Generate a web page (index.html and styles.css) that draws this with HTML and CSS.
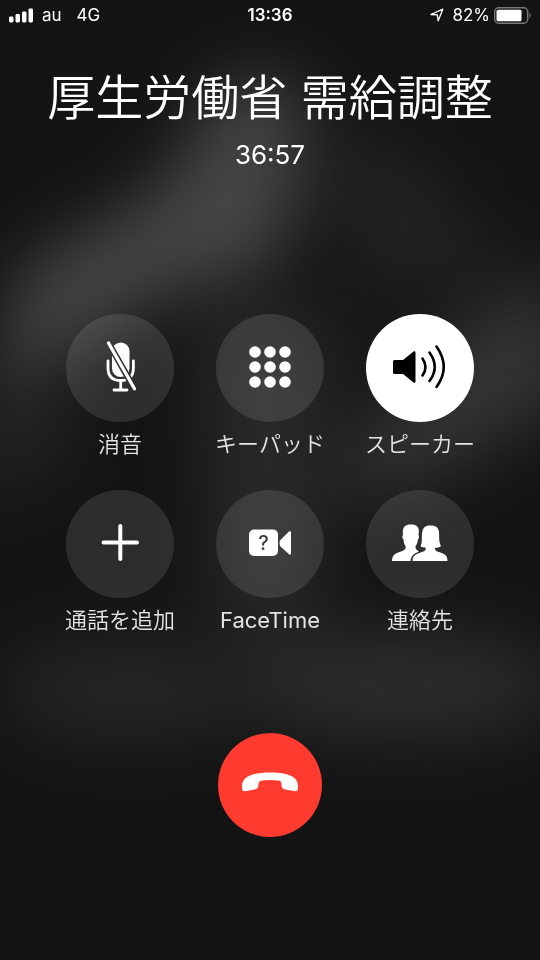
FILE: index.html
```html
<!DOCTYPE html>
<html lang="ja">
<head>
<meta charset="utf-8">
<meta name="viewport" content="width=device-width, initial-scale=1">
<title>通話中</title>
<link rel="stylesheet" href="styles.css">
</head>
<body>
<svg class="backdrop" viewBox="0 0 540 960" preserveAspectRatio="none" aria-hidden="true">
  <defs>
    <filter id="soft" x="-60%" y="-60%" width="220%" height="220%" color-interpolation-filters="sRGB"><feGaussianBlur stdDeviation="34"/></filter>
  </defs>
  <g filter="url(#soft)">
    <path d="M20 270 L160 190 L225 80 L300 80 L300 200 L270 270 L170 290 L90 340 L-10 400 Z" fill="#464648"/>
    <path d="M200 310 H335 L315 630 H215 Z" fill="#292929"/>
    <path d="M560 270 L450 330 L340 460 L360 510 L470 460 L580 390 Z" fill="#343434"/>
    <path d="M-40 400 L80 380 L70 470 L-40 500 Z" fill="#222222"/>
    <path d="M310 120 L410 150 L520 280 L360 290 Z" fill="#232222"/>
    <ellipse cx="130" cy="690" rx="130" ry="50" fill="#262626"/>
    <ellipse cx="400" cy="685" rx="160" ry="56" fill="#2c2c2c"/>
  </g>
</svg>
<div class="screen">
  <header class="status">
    <div class="status-left">
      <svg class="signal" viewBox="0 0 25 15" aria-label="電波">
        <g fill="#fff"><rect x="1" y="8.500" width="4.500" height="6" rx="1.400"/><rect x="7.500" y="6" width="4.500" height="8.500" rx="1.400"/><rect x="14" y="3.500" width="4.500" height="11" rx="1.400"/><rect x="20.500" y="0.500" width="4.500" height="14" rx="1.400"/></g>
      </svg>
      <span>au</span>
      <span class="network">4G</span>
    </div>
    <time class="clock">13:36</time>
    <div class="status-right">
      <svg class="location" viewBox="0 0 14 14" aria-hidden="true"><path d="M1 6.500 L12.800 1.200 L8.200 12.800 L7.300 6.800 Z" fill="none" stroke="#fff" stroke-width="1.300" stroke-linejoin="round"/></svg>
      <span>82%</span>
      <svg class="battery" viewBox="0 0 38 17" aria-hidden="true">
        <rect x="0.700" y="0.700" width="33" height="15.600" rx="4" fill="none" stroke="#777" stroke-width="1.400"/>
        <rect x="2.500" y="2.700" width="25" height="11.600" rx="1.500" fill="#fff"/>
        <path d="M35.500 5.500 Q38 8.500 35.500 11.500 Z" fill="#777"/>
      </svg>
    </div>
  </header>

  <main class="call">
    <h1 class="caller">厚生労働省 需給調整</h1>
    <p class="duration">36:57</p>

    <div class="controls">
      <button class="control" type="button">
        <span class="disc"><svg class="icon" viewBox="0 0 108 108" aria-hidden="true">
          <defs>
            <mask id="slash-gap">
              <rect width="108" height="108" fill="#fff"/>
              <path d="M39.500 23.700 L72 81" stroke="#000" stroke-width="6.400"/>
            </mask>
          </defs>
          <g mask="url(#slash-gap)">
            <rect x="46" y="28.500" width="17.500" height="34.500" rx="8.700" fill="#fff"/>
            <path d="M42 47 V54 C42 62.500 47 66.500 54.700 66.500 S67.400 62.500 67.400 54 V47 M54.700 67 V76 M48 76 H61" fill="none" stroke="#fff" stroke-width="2.800" stroke-linecap="round"/>
          </g>
          <path d="M42.500 29 L68.500 74.800" stroke="#fff" stroke-width="3.300" stroke-linecap="round"/>
        </svg></span>
        <span class="label">消音</span>
      </button>
      <button class="control" type="button">
        <span class="disc"><svg class="icon" viewBox="0 0 108 108" aria-hidden="true">
          <g fill="#fff"><circle cx="39" cy="38" r="5.800"/><circle cx="54" cy="38" r="5.800"/><circle cx="69" cy="38" r="5.800"/><circle cx="39" cy="53" r="5.800"/><circle cx="54" cy="53" r="5.800"/><circle cx="69" cy="53" r="5.800"/><circle cx="39" cy="68" r="5.800"/><circle cx="54" cy="68" r="5.800"/><circle cx="69" cy="68" r="5.800"/></g>
        </svg></span>
        <span class="label">キーパッド</span>
      </button>
      <button class="control active" type="button" aria-pressed="true">
        <span class="disc"><svg class="icon" viewBox="0 0 108 108" aria-hidden="true">
          <path d="M28.500 46 H37 L47.500 37.500 Q49.500 36.500 49.500 38.500 V67.500 Q49.500 69.500 47.500 68.500 L37 60 H28.500 Q27 60 27 58.500 V47.500 Q27 46 28.500 46 Z" fill="#000"/>
          <path d="M56.500 44.500 Q62.500 53 56.500 61.500 M63.500 38.500 Q74 53 63.500 67 M70.500 32.500 Q85 53 70.500 73" fill="none" stroke="#000" stroke-width="2.600" stroke-linecap="round"/>
        </svg></span>
        <span class="label">スピーカー</span>
      </button>
      <button class="control" type="button">
        <span class="disc"><svg class="icon" viewBox="0 0 108 108" aria-hidden="true">
          <path d="M54.300 36 V69 M37.500 52.500 H71" stroke="#fff" stroke-width="4" stroke-linecap="round"/>
        </svg></span>
        <span class="label">通話を追加</span>
      </button>
      <button class="control" type="button">
        <span class="disc"><svg class="icon" viewBox="0 0 108 108" aria-hidden="true">
          <rect x="33" y="39.500" width="29" height="26.500" rx="5" fill="#fff"/>
          <path d="M64 50.500 L73 41.500 Q75 40.200 75 42.700 V63 Q75 65.500 73 64.200 L64 56 Q63 53 64 50.500 Z" fill="#fff"/>
          <text class="icon-mark" x="47.500" y="60" text-anchor="middle">?</text>
        </svg></span>
        <span class="label latin">FaceTime</span>
      </button>
      <button class="control" type="button">
        <span class="disc"><svg class="icon" viewBox="0 0 108 108" aria-hidden="true">
          <g fill="#fff" transform="translate(0 -1)">
            <path d="M26 72 C26 66 29 64.500 35 62.500 C39 61 40 60 39.500 57 C38 55 37.800 53 37.500 50.500 C36 49 36 47 37 46 C36 38 39 35.500 45 35.500 C51 35.500 54 38 52.500 46 C53.500 47 53 49.500 52 50.500 C51.500 53.500 51 55.500 49.500 57 C49.500 59.500 50 61 53 62.500 C47.500 65 45 67 44.500 72 Z"/>
            <path d="M46.500 72 C46.500 66.500 50 65 56 63 C59.500 62 60 61 59.500 58.500 C57.500 58.500 55.500 58 54.500 57 C57 52 55 47 56.500 42 C57.500 38 60 36.500 64 36.500 C69 36 72.500 38 73 43 C73.500 48 72.500 52 75 57 C73.500 58.500 71.500 58.700 69 58.700 C69 61 69.500 62 73 63 C79 65 81.500 66.500 81.500 72 Z"/>
          </g>
        </svg></span>
        <span class="label">連絡先</span>
      </button>
    </div>

    <button class="end" type="button" aria-label="通話を終了">
      <svg class="icon" viewBox="0 0 104 104" aria-hidden="true">
        <path d="M24 53 C24 45 31 39.500 52 39.500 S80 45 80 53 C80 57 79.500 58.500 77.500 58.200 L67.500 56.500 C64.500 56 63.500 54.500 63.500 50.500 C63.300 48.500 62.500 47.800 60 47.400 Q52 46.500 44 47.400 C41.500 47.800 41 48.500 40.500 51 C40.300 54.500 39.500 56 36.500 56.500 L27 58.200 C24.500 58.500 24 57 24 53 Z" fill="#fff"/>
      </svg>
    </button>
  </main>
</div>
</body>
</html>
```
FILE: styles.css
```css
* {
  box-sizing: border-box;
}

body {
  margin: 0;
  min-height: 100vh;
  background: #141414;
  color: #fff;
  font-family: Inter, "Noto Sans CJK JP", sans-serif;
}

.backdrop {
  position: fixed;
  inset: 0;
  z-index: -1;
  width: 100%;
  height: 100%;
}

.screen {
  display: flex;
  flex-direction: column;
  min-height: 100vh;
}

.status {
  display: grid;
  grid-template-columns: 1fr auto 1fr;
  align-items: center;
  padding: 0 8px;
  font-size: 17px;
  line-height: 30px;
}

.status-left,
.status-right {
  display: flex;
  align-items: center;
}

.status-left {
  gap: 9px;
}

.status-right {
  justify-content: flex-end;
  gap: 4px;
}

.signal {
  width: 25px;
  height: 15px;
}

.network {
  margin-left: 6px;
}

.clock {
  font-weight: 600;
}

.location {
  width: 14px;
  height: 14px;
  margin-right: 4px;
}

.battery {
  width: 38px;
  height: 17px;
}

.call {
  display: flex;
  flex-direction: column;
  align-items: center;
  padding-top: 36px;
}

.caller {
  margin: 0;
  font-size: 48px;
  font-weight: 350;
  line-height: 64px;
  text-align: center;
}

.duration {
  margin: 9px 0 0;
  font-size: 26px;
  line-height: 32px;
}

.controls {
  display: grid;
  grid-template-columns: repeat(3, auto);
  gap: 24px 40px;
  margin-top: 143px;
}

.control {
  display: flex;
  flex-direction: column;
  align-items: center;
  padding: 0;
  border: 0;
  background: none;
  color: #e4e4e4;
  font: inherit;
  cursor: pointer;
}

.disc {
  width: 108px;
  height: 108px;
  border-radius: 50%;
  background: rgba(255, 255, 255, 0.11);
}

.active .disc {
  background: #fff;
}

.icon {
  display: block;
  width: 100%;
  height: 100%;
}

.icon-mark {
  fill: #3c3c3c;
  font-size: 20px;
  font-weight: 500;
}

.label {
  font-size: 22px;
  font-weight: 350;
  line-height: 44px;
  white-space: nowrap;
}

.latin {
  font-weight: 400;
}

.end {
  width: 104px;
  height: 104px;
  margin-top: 91px;
  padding: 0;
  border: 0;
  border-radius: 50%;
  background: #ff3b30;
  cursor: pointer;
}
```
